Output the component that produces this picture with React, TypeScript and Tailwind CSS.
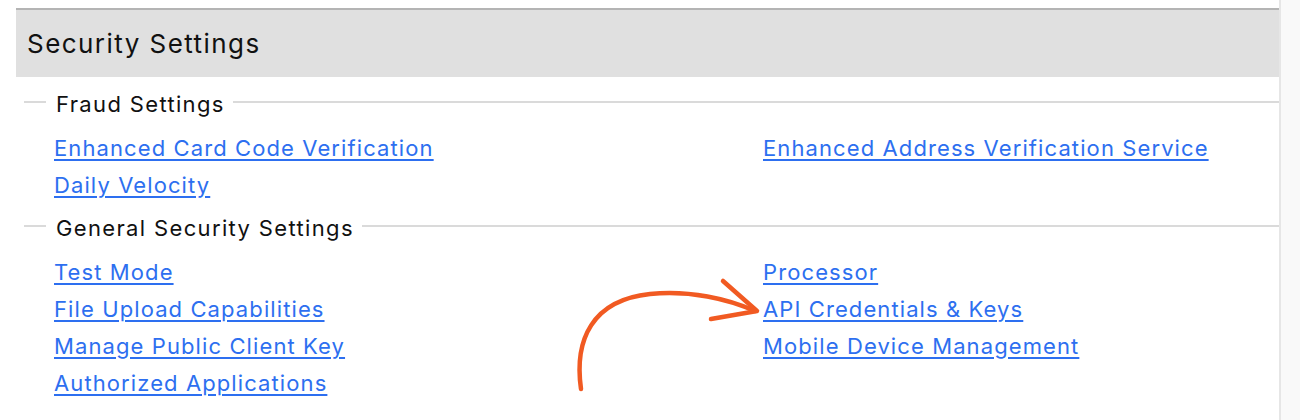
import type { ReactNode } from "react";

const FONT = { fontFamily: "Inter, 'Noto Sans', Arial, sans-serif" };

function Legend({ children }: { children: ReactNode }) {
  return (
    <div className="flex h-[32px] items-center">
      <div className="ml-[8px] h-[2px] w-[22px] bg-[#dadada]" />
      <span className="whitespace-nowrap pl-[10px] pr-[8px] pt-[3px] text-[22px] leading-none tracking-[1.35px] text-[#111]">{children}</span>
      <div className="h-[2px] flex-1 bg-[#dadada]" />
    </div>
  );
}

function LinkRow({ left, right }: { left?: string; right?: string }) {
  return (
    <div className="grid h-[37px] grid-cols-[709px_1fr] items-center pl-[38px] text-[22px] leading-none tracking-[1.1px]">
      <div>{left && <a href="#" className="text-[#2d6ff0] underline decoration-[1.5px] underline-offset-[3px]">{left}</a>}</div>
      <div>{right && <a href="#" className="text-[#2d6ff0] underline decoration-[1.5px] underline-offset-[3px]">{right}</a>}</div>
    </div>
  );
}

export default function App() {
  return (
    <div className="relative flex h-[420px] w-[1300px] overflow-hidden bg-white" style={FONT}>
      <div className="w-[1281px] shrink-0 border-r-2 border-[#e6e6e6] pl-4 pt-2">
        <div className="flex h-[69px] items-center border-t-2 border-[#b4b4b4] bg-[#e0e0e0] pl-[11px] text-[26px] tracking-[1.45px] text-[#111]">
          Security Settings
        </div>
        <div className="mt-[9px]">
          <Legend>Fraud Settings</Legend>
        </div>
        <div className="mt-[11px]">
          <LinkRow left="Enhanced Card Code Verification" right="Enhanced Address Verification Service" />
          <LinkRow left="Daily Velocity" />
        </div>
        <div className="mt-[7px]">
          <Legend>General Security Settings</Legend>
        </div>
        <div className="mt-[11px]">
          <LinkRow left="Test Mode" right="Processor" />
          <LinkRow left="File Upload Capabilities" right="API Credentials & Keys" />
          <LinkRow left="Manage Public Client Key" right="Mobile Device Management" />
          <LinkRow left="Authorized Applications" />
        </div>
      </div>
      <div className="flex-1 bg-[#f9f9f9]" />

      <svg className="pointer-events-none absolute left-0 top-0" width="1300" height="420" viewBox="0 0 1300 420">
        <g fill="none" stroke="#f15a22" strokeWidth="4.5" strokeLinecap="round" strokeLinejoin="round">
          <path d="M581 389 C 574 340, 592 300, 650 294 C 690 290, 728 299, 755 311" />
          <path d="M723 281 L757 311 L711 319" />
        </g>
      </svg>
    </div>
  );
}
